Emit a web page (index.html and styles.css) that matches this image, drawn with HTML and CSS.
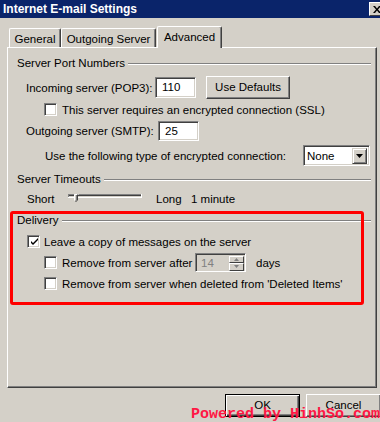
FILE: index.html
```html
<!DOCTYPE html>
<html>
<head>
<meta charset="utf-8">
<link rel="stylesheet" href="styles.css">
</head>
<body>
<div class="dialog">
  <div class="titlebar">
    <span class="title">Internet E-mail Settings</span>
    <span class="close"><svg width="8" height="7" viewBox="0 0 8 7"><path d="M0 0h2l2 2.5L6 0h2L5 3.5 8 7H6L4 4.5 2 7H0l3-3.5z" fill="#000"/></svg></span>
  </div>
  <div class="tabs">
    <div class="tab t-general">General</div>
    <div class="tab t-outgoing">Outgoing Server</div>
    <div class="tab active t-adv">Advanced</div>
  </div>
  <div class="panel">
    <div class="group g1"><span>Server Port Numbers</span><i class="etch"></i></div>
    <div class="row r-in">
      <span class="lbl-in">Incoming server (POP3):</span>
      <div class="field f-in">110</div>
      <div class="btn b-def">Use Defaults</div>
    </div>
    <div class="row r-ssl"><span class="cb"></span><span class="cbtext">This server requires an encrypted connection (SSL)</span></div>
    <div class="row r-out">
      <span class="lbl-out">Outgoing server (SMTP):</span>
      <div class="field f-out">25</div>
    </div>
    <div class="row r-enc">
      <span class="lbl-enc">Use the following type of encrypted connection:</span>
      <div class="select"><span class="sel-val">None</span><span class="dd"><svg width="7" height="4" viewBox="0 0 7 4"><path d="M0 0h7L3.5 4z" fill="#000"/></svg></span></div>
    </div>
    <div class="group g2"><span>Server Timeouts</span><i class="etch"></i></div>
    <div class="row r-time">
      <span class="short">Short</span>
      <svg class="slider" width="78" height="14" viewBox="0 0 78 14">
        <rect x="2" y="2" width="74" height="1" fill="#808080"/>
        <rect x="2" y="3" width="73" height="1" fill="#404040"/>
        <rect x="2" y="2" width="1" height="4" fill="#808080"/>
        <rect x="2" y="5" width="74" height="1" fill="#ffffff"/>
        <rect x="75" y="2" width="1" height="4" fill="#ffffff"/>
        <path d="M8 2h4v6l-2 2-2-2z" fill="#d4d0c8"/>
        <path d="M8 2h4M8 2v6" stroke="#fff" stroke-width="1" transform="translate(0.5 0.5)" fill="none"/>
        <path d="M11.5 2.5v5.5l-2 2" stroke="#404040" stroke-width="1" fill="none"/>
        <path d="M10.5 3v5l-1 1" stroke="#808080" stroke-width="1" fill="none"/>
      </svg>
      <span class="long">Long</span>
      <span>1 minute</span>
    </div>
    <div class="group g3"><span>Delivery</span><i class="etch"></i></div>
    <div class="row r-leave"><span class="cb checked"><svg width="9" height="9" viewBox="0 0 9 9"><path d="M1 3l2 2 5-5v2L3 7 1 5z" fill="#000"/></svg></span><span class="cbtext2">Leave a copy of messages on the server</span></div>
    <div class="row r-after">
      <span class="cb"></span><span class="cbtext after-text">Remove from server after</span>
      <div class="spin"><span class="spin-val">14</span><span class="spin-btns"><span class="sb"><svg width="5" height="3" viewBox="0 0 5 3"><path d="M2.5 0L5 3H0z" fill="#808080"/></svg></span><span class="sb"><svg width="5" height="3" viewBox="0 0 5 3"><path d="M0 0h5L2.5 3z" fill="#808080"/></svg></span></span></div>
      <span class="days">days</span>
    </div>
    <div class="row r-del"><span class="cb"></span><span class="cbtext">Remove from server when deleted from 'Deleted Items'</span></div>
  </div>
  <div class="buttons">
    <div class="btn ok">OK</div>
    <div class="btn cancel">Cancel</div>
  </div>
</div>
<div class="highlight"></div>
<div class="watermark">Powered by HinhSo.com</div>
</body>
</html>
```

FILE: styles.css
```css
html, body {
  margin: 0;
  padding: 0;
  width: 380px;
  height: 422px;
  overflow: hidden;
  background: #d4d0c8;
}
body {
  position: relative;
  font-family: "Liberation Sans", Arial, sans-serif;
  font-size: 11.5px;
  color: #000;
}
.dialog {
  width: 386px;
  height: 422px;
  background: #d4d0c8;
}
.titlebar {
  height: 18px;
  background: #0a246a;
  display: flex;
  align-items: center;
  padding-left: 3px;
}
.title {
  color: #fff;
  font-weight: bold;
  font-size: 12px;
  line-height: 18px;
}
.close {
  margin-left: auto;
  margin-right: 1px;
  width: 16px;
  height: 14px;
  box-sizing: border-box;
  background: #d4d0c8;
  border-top: 1px solid #fff;
  border-left: 1px solid #fff;
  border-right: 1px solid #404040;
  border-bottom: 1px solid #404040;
  display: flex;
  align-items: center;
  justify-content: center;
}
.tabs {
  display: flex;
  align-items: flex-end;
  margin-top: 8px;
  margin-left: 9px;
  height: 21px;
}
.tab {
  box-sizing: border-box;
  height: 19px;
  border-top: 1px solid #fff;
  border-left: 1px solid #fff;
  border-right: 1px solid #404040;
  box-shadow: inset -1px 0 0 #808080;
  border-radius: 2px 2px 0 0;
  padding: 3px 0 0 0;
  text-align: center;
  line-height: 14px;
}
.t-general { width: 52px; }
.t-outgoing { width: 95px; margin-left: 0; }
.tab.active {
  width: 65px;
  height: 22px;
  margin-left: 1px;
  margin-bottom: -1px;
  position: relative;
  z-index: 1;
  background: #d4d0c8;
  padding-top: 3px;
}
.panel {
  box-sizing: border-box;
  margin-left: 7px;
  width: 370px;
  height: 341px;
  border-top: 1px solid #fff;
  border-left: 1px solid #fff;
  border-right: 1px solid #404040;
  border-bottom: 1px solid #404040;
  box-shadow: inset -1px -1px 0 #808080;
  display: flex;
  flex-direction: column;
}
.group {
  display: flex;
  align-items: center;
  height: 14px;
  line-height: 14px;
  margin-left: 9px;
  margin-right: 5px;
}
.etch {
  flex: 1;
  height: 0;
  border-top: 1px solid #808080;
  border-bottom: 1px solid #fff;
  margin-left: 3px;
  margin-top: 2px;
}
.g1 { margin-top: 8px; }
.g2 { margin-top: 6px; }
.g3 { margin-top: 7px; }
.row {
  display: flex;
  align-items: center;
  white-space: nowrap;
}
.field {
  box-sizing: border-box;
  background: #fff;
  border-top: 1px solid #808080;
  border-left: 1px solid #808080;
  border-right: 1px solid #fff;
  border-bottom: 1px solid #fff;
  box-shadow: inset 1px 1px 0 #404040, inset -1px -1px 0 #d4d0c8;
  padding-left: 6px;
  line-height: 18px;
}
.btn {
  box-sizing: border-box;
  border-top: 1px solid #fff;
  border-left: 1px solid #fff;
  border-right: 1px solid #404040;
  border-bottom: 1px solid #404040;
  box-shadow: inset -1px -1px 0 #808080;
  text-align: center;
  background: #d4d0c8;
}
.r-in { margin-top: 6px; margin-left: 18px; height: 23px; }
.lbl-in { width: 129px; }
.f-in { width: 41px; height: 21px; }
.b-def { margin-left: 10px; width: 84px; height: 23px; line-height: 21px; }
.cb {
  box-sizing: border-box;
  width: 13px;
  height: 13px;
  flex: none;
  background: #fff;
  border-top: 1px solid #808080;
  border-left: 1px solid #808080;
  border-right: 1px solid #fff;
  border-bottom: 1px solid #fff;
  box-shadow: inset 1px 1px 0 #404040, inset -1px -1px 0 #d4d0c8;
  display: flex;
  align-items: center;
  justify-content: center;
}
.cb.checked svg { margin: 1px 0 0 1px; }
.cbtext { margin-left: 5px; }
.cbtext2 { margin-left: 4px; }
.r-ssl { margin-top: 4px; margin-left: 36px; height: 13px; }
.r-out { margin-top: 5px; margin-left: 18px; height: 20px; }
.lbl-out { width: 132px; }
.f-out { width: 41px; height: 20px; }
.r-enc { margin-top: 4px; margin-left: 37px; height: 21px; }
.lbl-enc { width: 258px; }
.select {
  box-sizing: border-box;
  width: 67px;
  height: 21px;
  background: #fff;
  border-top: 1px solid #808080;
  border-left: 1px solid #808080;
  border-right: 1px solid #fff;
  border-bottom: 1px solid #fff;
  box-shadow: inset 1px 1px 0 #404040, inset -1px -1px 0 #d4d0c8;
  display: flex;
  align-items: center;
  padding: 2px;
}
.sel-val { flex: 1; padding-left: 1px; }
.dd {
  box-sizing: border-box;
  width: 15px;
  height: 16px;
  border-top: 1px solid #d4d0c8;
  border-left: 1px solid #d4d0c8;
  border-right: 1px solid #404040;
  border-bottom: 1px solid #404040;
  box-shadow: inset 1px 1px 0 #fff, inset -1px -1px 0 #808080;
  background: #d4d0c8;
  display: flex;
  align-items: center;
  justify-content: center;
}
.r-time { margin-top: 6px; margin-left: 19px; height: 14px; }
.short { width: 39px; }
.slider { flex: none; }
.long { margin-left: 12px; width: 35px; }
.r-leave { margin-top: 8px; margin-left: 19px; height: 13px; }
.r-after { margin-top: 5px; margin-left: 36px; height: 19px; }
.after-text { width: 133px; }
.spin {
  box-sizing: border-box;
  width: 51px;
  height: 19px;
  background: #d4d0c8;
  border-top: 1px solid #808080;
  border-left: 1px solid #808080;
  border-right: 1px solid #fff;
  border-bottom: 1px solid #fff;
  box-shadow: inset 1px 1px 0 #404040, inset -1px -1px 0 #d4d0c8;
  display: flex;
  align-items: center;
  padding: 2px 1px 1px 2px;
}
.spin-val { flex: 1; color: #808080; padding-left: 3px; }
.spin-btns {
  display: flex;
  flex-direction: column;
  width: 15px;
  height: 15px;
}
.sb {
  box-sizing: border-box;
  height: 7.5px;
  border-top: 1px solid #fff;
  border-left: 1px solid #fff;
  border-right: 1px solid #404040;
  border-bottom: 1px solid #404040;
  display: flex;
  align-items: center;
  justify-content: center;
}
.days { margin-left: 10px; }
.r-del { margin-top: 5px; margin-left: 36px; height: 13px; }
.buttons {
  display: flex;
  margin-top: 6px;
  margin-left: 225px;
  gap: 6px;
}
.buttons .btn {
  width: 75px;
  height: 23px;
  line-height: 21px;
}
.btn.ok {
  border: 1px solid #000;
  box-shadow: inset 1px 1px 0 #fff, inset -1px -1px 0 #404040, inset -2px -2px 0 #808080;
}
.highlight {
  position: absolute;
  left: 10px;
  top: 211px;
  width: 354px;
  height: 94px;
  box-sizing: border-box;
  border: 3px solid #ff0000;
  border-radius: 3px;
}
.watermark {
  position: absolute;
  left: 191px;
  top: 406px;
  font-family: "Liberation Mono", "DejaVu Sans Mono", monospace;
  font-weight: bold;
  font-size: 15px;
  line-height: 18px;
  color: #ff1744;
  white-space: nowrap;
}
```
